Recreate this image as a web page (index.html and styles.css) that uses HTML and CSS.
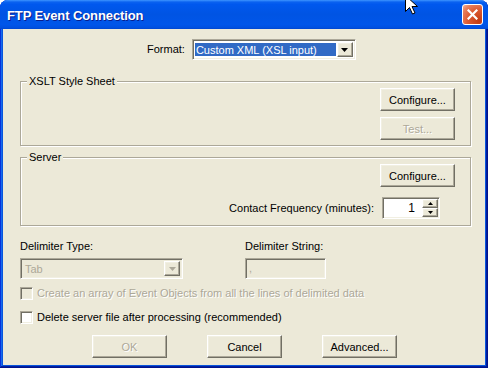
FILE: index.html
```html
<!DOCTYPE html>
<html lang="en">
<head>
    <meta charset="UTF-8">
    <title>FTP Event Connection</title>
    <link rel="stylesheet" href="styles.css">
</head>
<body>
    <div class="window">
        <!-- Title bar -->
        <div class="titlebar">
            <span class="title">FTP Event Connection</span>
            <button class="close-btn" aria-label="Close">
                <svg width="11" height="11" viewBox="0 0 11 11"><path d="M1.5 1.5 L9.5 9.5 M9.5 1.5 L1.5 9.5" stroke="#fff" stroke-width="2.2" stroke-linecap="square"/></svg>
            </button>
        </div>

        <div class="client">
            <!-- Format -->
            <div class="format-row">
                <span class="label">Format:</span>
                <div class="combo combo-format">
                    <span class="combo-value">Custom XML (XSL input)</span>
                    <span class="combo-btn">
                        <svg width="7" height="4" viewBox="0 0 7 4"><path d="M0 0 H7 L3.5 4 Z" fill="#000"/></svg>
                    </span>
                </div>
            </div>

            <!-- XSLT group -->
            <div class="group group-xslt">
                <span class="group-title">XSLT Style Sheet</span>
                <div class="group-actions">
                    <button class="btn">Configure...</button>
                    <button class="btn" disabled>Test...</button>
                </div>
            </div>

            <!-- Server group -->
            <div class="group group-server">
                <span class="group-title">Server</span>
                <div class="group-actions">
                    <button class="btn">Configure...</button>
                    <div class="freq-row">
                        <span class="label">Contact Frequency (minutes):</span>
                        <div class="spin">
                            <span class="spin-value">1</span>
                            <div class="spin-btns">
                                <span class="spin-btn"><svg width="5" height="3" viewBox="0 0 5 3"><path d="M2.5 0 L5 3 H0 Z" fill="#000"/></svg></span>
                                <span class="spin-btn"><svg width="5" height="3" viewBox="0 0 5 3"><path d="M0 0 H5 L2.5 3 Z" fill="#000"/></svg></span>
                            </div>
                        </div>
                    </div>
                </div>
            </div>

            <!-- Delimiters -->
            <div class="delims">
                <span class="label">Delimiter Type:</span>
                <span class="label">Delimiter String:</span>
                <div class="combo combo-disabled">
                    <span class="combo-value">Tab</span>
                    <span class="combo-btn">
                        <svg width="7" height="4" viewBox="0 0 7 4"><path d="M0 0 H7 L3.5 4 Z" fill="#ACA899"/></svg>
                    </span>
                </div>
                <div class="textbox textbox-disabled">,</div>
            </div>

            <label class="check check-disabled">
                <span class="check-box"></span>
                <span class="check-text">Create an array of Event Objects from all the lines of delimited data</span>
            </label>
            <label class="check check-delete">
                <span class="check-box"></span>
                <span class="check-text">Delete server file after processing (recommended)</span>
            </label>

            <!-- Dialog buttons -->
            <div class="actions">
                <button class="btn" disabled>OK</button>
                <button class="btn">Cancel</button>
                <button class="btn">Advanced...</button>
            </div>
        </div>

        <svg class="cursor" width="13" height="20" viewBox="0 0 13 20">
            <path d="M0.5 0.5 V16.5 L4.5 12.5 L7.5 19 L10 18 L7 11.5 H12.5 Z" fill="#fff" stroke="#000" stroke-width="1"/>
        </svg>
    </div>
</body>
</html>
```

FILE: styles.css
```css
body {
    margin: 0;
    background: #fff;
    font-family: 'Liberation Sans', Arial, sans-serif;
    font-size: 11px;
}
.window {
    position: relative;
    width: 488px;
    height: 368px;
    box-sizing: border-box;
    display: flex;
    flex-direction: column;
    background: #0855dd;
    border-radius: 8px 8px 0 0;
    overflow: hidden;
    box-shadow: inset -1px -1px #00138c, inset 1px 0 #0831d9, inset -2px -2px #001ea0, inset 2px 0 #166aee;
}
.titlebar {
    height: 29px;
    flex-shrink: 0;
    display: flex;
    align-items: center;
    padding: 0 5px 0 7px;
    background: linear-gradient(180deg, #3d95ff 0, #0a62f0 7%, #0058ee 15%, #0054e3 50%, #0056ea 85%, #0050e0 95%, #0046d0 100%);
}
.title {
    color: #fff;
    font-weight: bold;
    font-size: 13px;
    letter-spacing: -0.1px;
    text-shadow: 1px 1px #0a1e8c;
    padding-top: 1px;
}
.close-btn {
    margin-left: auto;
    width: 21px;
    height: 21px;
    padding: 0;
    display: flex;
    align-items: center;
    justify-content: center;
    border: 1px solid #fff;
    border-radius: 3px;
    background: radial-gradient(circle at 85% 85%, #c23b12 0, #dc5a32 50%, #e8805e 80%, #f4b39a 100%);
}
.client {
    flex: 1;
    margin: 0 3px 3px;
    background: #ece9d8;
    padding: 10px 0 0 17px;
    color: #000;
}
.label {
    line-height: 13px;
    white-space: nowrap;
}

/* raised / sunken edges */
.btn, .combo-btn, .spin-btn {
    box-sizing: border-box;
    background: #ece9d8;
    border: 1px solid;
    border-color: #fff #716f64 #716f64 #fff;
    box-shadow: inset -1px -1px #aca899, inset 1px 1px #f1efe2;
}
.combo, .textbox, .spin, .check-box {
    box-sizing: border-box;
    border: 1px solid;
    border-color: #aca899 #fff #fff #aca899;
    box-shadow: inset 1px 1px #716f64, inset -1px -1px #f1efe2;
}

.btn {
    width: 75px;
    height: 23px;
    padding: 0;
    font-family: inherit;
    font-size: 11px;
    color: #000;
}
.btn:disabled {
    color: #aca899;
    text-shadow: 1px 1px #fff;
}

.format-row {
    display: flex;
    align-items: center;
    gap: 7px;
    padding-left: 127px;
}
.combo {
    display: flex;
    height: 21px;
    padding: 2px;
    background: #fff;
}
.combo-value {
    flex: 1;
    line-height: 15px;
    padding-left: 2px;
    white-space: nowrap;
    overflow: hidden;
}
.combo-btn {
    width: 16px;
    display: flex;
    align-items: center;
    justify-content: center;
}
.combo-format {
    width: 164px;
}
.combo-format .combo-value {
    margin: 1px 1px 1px 0;
    background: #316ac5;
    color: #fff;
    padding-left: 1px;
}
.combo-disabled {
    background: #ece9d8;
    width: 163px;
}
.combo-disabled .combo-value {
    color: #aca899;
    line-height: 17px;
}

.group {
    position: relative;
    width: 451px;
    box-sizing: border-box;
    border: 1px solid #aca899;
    box-shadow: inset 1px 1px #fff, 1px 1px #fff;
}
.group-title {
    position: absolute;
    top: -7px;
    left: 6px;
    padding: 0 2px;
    line-height: 13px;
    background: #ece9d8;
}
.group-actions {
    display: flex;
    flex-direction: column;
    align-items: flex-end;
    padding: 6px 15px 0 0;
}
.group-xslt {
    margin-top: 21px;
    height: 65px;
}
.group-xslt .group-actions {
    gap: 6px;
}
.group-server {
    margin-top: 11px;
    height: 69px;
}
.group-server .group-actions {
    gap: 10px;
}
.freq-row {
    display: flex;
    align-items: center;
    gap: 8px;
    margin-right: 15px;
}
.spin {
    width: 58px;
    height: 22px;
    display: flex;
    align-items: center;
    padding: 2px 1px 2px 2px;
    background: #fff;
}
.spin-value {
    flex: 1;
    text-align: right;
    padding-right: 7px;
    font-size: 12px;
}
.spin-btns {
    display: flex;
    flex-direction: column;
    width: 16px;
    height: 18px;
}
.spin-btn {
    flex: 1;
    display: flex;
    align-items: center;
    justify-content: center;
}

.delims {
    display: grid;
    grid-template-columns: 163px 81px;
    column-gap: 62px;
    row-gap: 5px;
    margin-top: 14px;
}
.textbox {
    height: 21px;
    padding: 2px 3px;
    line-height: 15px;
}
.textbox-disabled {
    background: #ece9d8;
    color: #aca899;
}

.check {
    display: flex;
    align-items: center;
    gap: 4px;
    height: 13px;
    line-height: 13px;
}
.check-box {
    width: 13px;
    height: 13px;
    background: #fff;
}
.check-disabled {
    margin-top: 8px;
}
.check-disabled .check-box {
    background: #ece9d8;
}
.check-disabled .check-text {
    color: #aca899;
    text-shadow: 1px 1px #fff;
}
.check-delete {
    margin-top: 11px;
}

.actions {
    display: flex;
    gap: 40px;
    margin-top: 11px;
    padding-left: 72px;
}

.cursor {
    position: absolute;
    left: 405px;
    top: -5px;
}
```
